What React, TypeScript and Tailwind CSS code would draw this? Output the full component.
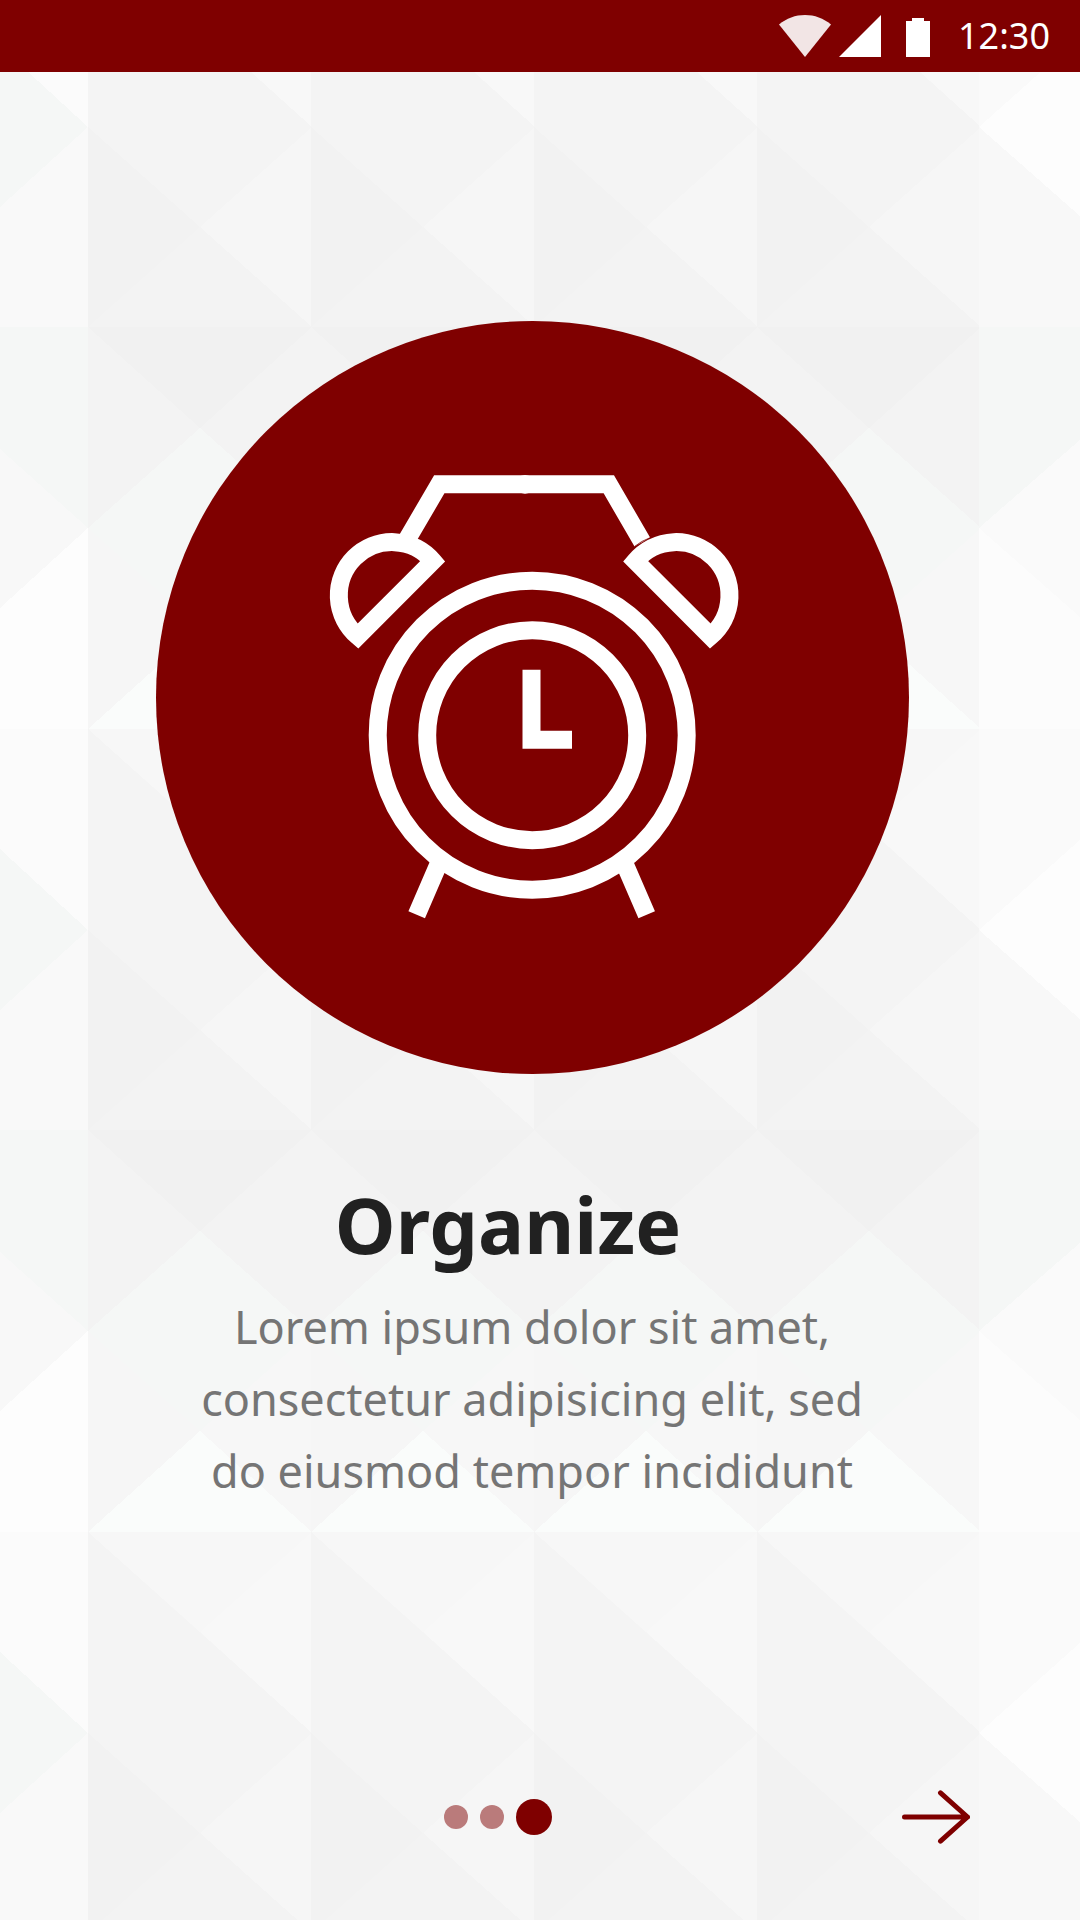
const MAROON = "#7f0000";

type Facet = { points: string; fill: string };

const centerFacets: Facet[] = [
  { points: "0,0 224,0 112,100", fill: "#f7f7f7" },
  { points: "224,0 112,100 224,201", fill: "#f8f8f8" },
  { points: "0,0 224,201 112,301 0,201", fill: "#f4f4f4" },
  { points: "0,201 112,301 0,401", fill: "#f2f2f2" },
  { points: "224,201 112,301 224,401", fill: "#f6f6f6" },
  { points: "0,401 112,301 224,401", fill: "#f3f3f3" },
  { points: "0,401 224,401 112,502", fill: "#f1f1f1" },
  { points: "0,401 112,502 0,602", fill: "#f3f3f3" },
  { points: "224,401 112,502 224,602", fill: "#f3f3f3" },
  { points: "0,602 112,502 224,602 112,702", fill: "#f5f7f6" },
  { points: "0,602 112,702 0,803", fill: "#f6f6f6" },
  { points: "224,602 112,702 224,803", fill: "#f7f7f7" },
  { points: "0,803 112,702 224,803", fill: "#fafcfb" },
];

const leftFacets: Facet[] = [
  { points: "0,0 88,0 88,201 0,120", fill: "#fbfbfb" },
  { points: "0,120 88,201 0,281", fill: "#f5f7f6" },
  { points: "0,281 88,201 88,401 0,401", fill: "#f9f9f9" },
  { points: "0,401 88,401 88,602 0,523", fill: "#f5f7f6" },
  { points: "0,523 88,602 0,682", fill: "#f8f8f8" },
  { points: "0,682 88,602 88,803 0,803", fill: "#fdfdfd" },
];

const rightFacets: Facet[] = [
  { points: "0,0 102,0 102,110 0,201", fill: "#fafafa" },
  { points: "0,201 102,110 102,291", fill: "#fdfdfd" },
  { points: "0,201 102,291 102,401 0,401", fill: "#f8f8f8" },
  { points: "0,401 102,401 102,513 0,602", fill: "#f5f7f6" },
  { points: "0,602 102,513 102,692", fill: "#fafafa" },
  { points: "0,602 102,692 102,803 0,803", fill: "#fcfcfc" },
];

const bands = [-74, 729, 1532];
const columns = [
  { x: 88, facets: centerFacets },
  { x: 311, facets: centerFacets },
  { x: 534, facets: centerFacets },
  { x: 757, facets: centerFacets },
  { x: 0, facets: leftFacets },
  { x: 979, facets: rightFacets },
];

function FacetBackdrop() {
  return (
    <svg
      aria-hidden="true"
      viewBox="0 0 1080 1920"
      preserveAspectRatio="xMidYMin slice"
      shapeRendering="crispEdges"
      className="absolute inset-0 size-full"
    >
      {bands.map((y) =>
        columns.map((column) => (
          <g key={`${column.x}-${y}`} transform={`translate(${column.x} ${y})`}>
            {column.facets.map((f) => (
              <polygon key={f.points} points={f.points} fill={f.fill} />
            ))}
          </g>
        )),
      )}
    </svg>
  );
}

function StatusBar() {
  return (
    <header className="relative flex h-[72px] items-center justify-end bg-[#7f0000] pr-[30px] text-white">
      <svg aria-label="Wi-Fi" viewBox="0 0 52 42" className="h-[42px] w-[52px]">
        <path d="M26 42 0 9.5C7.5 3.3 16.5 0 26 0s18.5 3.3 26 9.5Z" fill="#f2e5e5" />
      </svg>
      <svg aria-label="Signal" viewBox="0 0 42 42" className="ml-2 h-[42px] w-[42px]">
        <path d="M0 42 42 0V42Z" fill="currentColor" />
      </svg>
      <svg aria-label="Battery" viewBox="0 0 24 42" className="ml-[25px] h-[42px] w-6">
        <path d="M6 3H18V6H24V42H0V6H6Z" fill="currentColor" />
      </svg>
      <time className="ml-7 text-[36px] leading-[44px]">12:30</time>
    </header>
  );
}

function AlarmClock() {
  return (
    <svg
      role="img"
      aria-label="Alarm clock"
      viewBox="156 321 753 753"
      className="aspect-square w-[753px] max-w-full"
    >
      <circle cx="532.5" cy="697.5" r="376.5" fill={MAROON} />
      <g fill="none" stroke="#fff" strokeWidth="18">
        <circle cx="532.2" cy="735.2" r="154.5" />
        <circle cx="532.2" cy="735.2" r="105" />
        <path d="M531.5 669.7V739.7H572" />
        <path d="M406.7 540 439.3 484.3H608.8L642.3 542" />
        <circle cx="525" cy="484.3" r="9.4" fill="#fff" stroke="none" />
        <path d="M432.9 561.1A53.3 53.3 0 1 0 357.8 636.2Z" />
        <path d="M635.4 561.1A53.3 53.3 0 1 1 710.5 636.2Z" />
        <path d="M439 863 416.7 914.8M624.3 863 646.7 914.8" />
        <path d="M634.5 546.5Q641 541 650.5 537.5" stroke={MAROON} strokeWidth="0.8" />
      </g>
    </svg>
  );
}

const steps = ["Plan", "Share", "Organize"];

export default function App() {
  return (
    <div className="relative flex min-h-screen flex-col overflow-hidden bg-[#f5f5f5] font-['Noto_Sans',sans-serif]">
      <FacetBackdrop />
      <StatusBar />
      <main className="relative flex grow flex-col items-center pt-[249px] pr-4 text-center">
        <AlarmClock />
        <h1 className="mt-[97px] pr-12 text-[77px] leading-[108px] font-bold text-[#212121]">
          Organize
        </h1>
        <p className="mt-3 max-w-[700px] text-[45px] leading-[72px] text-[#757575]">
          Lorem ipsum dolor sit amet, consectetur adipisicing elit, sed do eiusmod tempor incididunt
        </p>
      </main>
      <footer className="relative grid grid-cols-[1fr_auto_1fr] items-center pr-[84px] pb-[50px]">
        <nav aria-label="Steps" className="col-start-2 flex items-center gap-3">
          {steps.map((step, i) => (
            <button
              key={step}
              type="button"
              aria-label={step}
              aria-current={i === 2 ? "step" : undefined}
              className={
                i === 2
                  ? "size-9 rounded-full bg-[#7f0000]"
                  : "size-6 rounded-full bg-[#7f0000]/50"
              }
            />
          ))}
        </nav>
        <button type="button" aria-label="Next" className="justify-self-end p-[26px] text-[#7f0000]">
          <svg viewBox="0 0 68 54" className="h-[54px] w-[68px]">
            <path
              d="M2.5 27H65.5M38.5 2.8 65.5 27 38.5 51.2"
              fill="none"
              stroke="currentColor"
              strokeWidth="5"
              strokeLinecap="round"
              strokeLinejoin="round"
            />
          </svg>
        </button>
      </footer>
    </div>
  );
}
